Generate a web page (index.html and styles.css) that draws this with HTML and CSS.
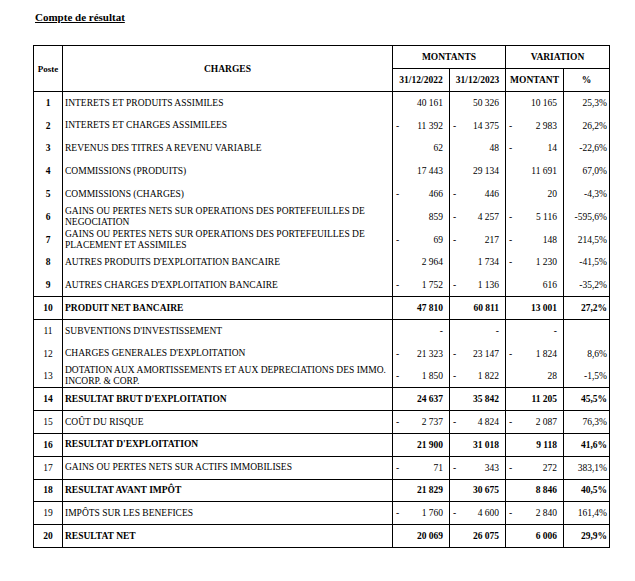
FILE: index.html
```html
<!DOCTYPE html>
<html lang="fr">
<head>
    <meta charset="UTF-8">
    <meta name="viewport" content="width=device-width, initial-scale=1.0">
    <title>Compte de résultat</title>
    <link rel="stylesheet" href="styles.css">
</head>
<body>
    <div class="page">
        <h1 class="page-title">Compte de résultat</h1>
        <table class="result-table">
            <colgroup>
                <col class="col-poste">
                <col class="col-label">
                <col class="col-amount">
                <col class="col-amount2">
                <col class="col-var">
                <col class="col-pct">
            </colgroup>
            <thead>
                <tr>
                    <th rowspan="2" class="th-poste">Poste</th>
                    <th rowspan="2">CHARGES</th>
                    <th colspan="2">MONTANTS</th>
                    <th colspan="2">VARIATION</th>
                </tr>
                <tr>
                    <th>31/12/2022</th>
                    <th>31/12/2023</th>
                    <th>MONTANT</th>
                    <th>%</th>
                </tr>
            </thead>
            <tbody>
                <tr>
                    <td class="poste strong">1</td>
                    <td class="label">INTERETS ET PRODUITS ASSIMILES</td>
                    <td class="num">40 161</td>
                    <td class="num">50 326</td>
                    <td class="num">10 165</td>
                    <td class="pct">25,3%</td>
                </tr>
                <tr>
                    <td class="poste strong">2</td>
                    <td class="label">INTERETS ET CHARGES ASSIMILEES</td>
                    <td class="num"><span class="minus">-</span>11 392</td>
                    <td class="num"><span class="minus">-</span>14 375</td>
                    <td class="num"><span class="minus">-</span>2 983</td>
                    <td class="pct">26,2%</td>
                </tr>
                <tr>
                    <td class="poste strong">3</td>
                    <td class="label">REVENUS DES TITRES A REVENU VARIABLE</td>
                    <td class="num">62</td>
                    <td class="num">48</td>
                    <td class="num"><span class="minus">-</span>14</td>
                    <td class="pct">-22,6%</td>
                </tr>
                <tr>
                    <td class="poste strong">4</td>
                    <td class="label">COMMISSIONS (PRODUITS)</td>
                    <td class="num">17 443</td>
                    <td class="num">29 134</td>
                    <td class="num">11 691</td>
                    <td class="pct">67,0%</td>
                </tr>
                <tr>
                    <td class="poste strong">5</td>
                    <td class="label">COMMISSIONS (CHARGES)</td>
                    <td class="num"><span class="minus">-</span>466</td>
                    <td class="num"><span class="minus">-</span>446</td>
                    <td class="num">20</td>
                    <td class="pct">-4,3%</td>
                </tr>
                <tr>
                    <td class="poste strong">6</td>
                    <td class="label">GAINS OU PERTES NETS SUR OPERATIONS DES PORTEFEUILLES DE<br>NEGOCIATION</td>
                    <td class="num">859</td>
                    <td class="num"><span class="minus">-</span>4 257</td>
                    <td class="num"><span class="minus">-</span>5 116</td>
                    <td class="pct">-595,6%</td>
                </tr>
                <tr>
                    <td class="poste strong">7</td>
                    <td class="label">GAINS OU PERTES NETS SUR OPERATIONS DES PORTEFEUILLES DE<br>PLACEMENT ET ASSIMILES</td>
                    <td class="num"><span class="minus">-</span>69</td>
                    <td class="num"><span class="minus">-</span>217</td>
                    <td class="num"><span class="minus">-</span>148</td>
                    <td class="pct">214,5%</td>
                </tr>
                <tr>
                    <td class="poste strong">8</td>
                    <td class="label">AUTRES PRODUITS D'EXPLOITATION BANCAIRE</td>
                    <td class="num">2 964</td>
                    <td class="num">1 734</td>
                    <td class="num"><span class="minus">-</span>1 230</td>
                    <td class="pct">-41,5%</td>
                </tr>
                <tr class="sep">
                    <td class="poste strong">9</td>
                    <td class="label">AUTRES CHARGES D'EXPLOITATION BANCAIRE</td>
                    <td class="num"><span class="minus">-</span>1 752</td>
                    <td class="num"><span class="minus">-</span>1 136</td>
                    <td class="num">616</td>
                    <td class="pct">-35,2%</td>
                </tr>
                <tr class="sep total">
                    <td class="poste">10</td>
                    <td class="label">PRODUIT NET BANCAIRE</td>
                    <td class="num">47 810</td>
                    <td class="num">60 811</td>
                    <td class="num">13 001</td>
                    <td class="pct">27,2%</td>
                </tr>
                <tr>
                    <td class="poste">11</td>
                    <td class="label">SUBVENTIONS D'INVESTISSEMENT</td>
                    <td class="num">-</td>
                    <td class="num">-</td>
                    <td class="num">-</td>
                    <td class="pct"></td>
                </tr>
                <tr>
                    <td class="poste">12</td>
                    <td class="label">CHARGES GENERALES D'EXPLOITATION</td>
                    <td class="num"><span class="minus">-</span>21 323</td>
                    <td class="num"><span class="minus">-</span>23 147</td>
                    <td class="num"><span class="minus">-</span>1 824</td>
                    <td class="pct">8,6%</td>
                </tr>
                <tr class="sep">
                    <td class="poste">13</td>
                    <td class="label">DOTATION AUX AMORTISSEMENTS ET AUX DEPRECIATIONS DES IMMO.<br>INCORP. &amp; CORP.</td>
                    <td class="num"><span class="minus">-</span>1 850</td>
                    <td class="num"><span class="minus">-</span>1 822</td>
                    <td class="num">28</td>
                    <td class="pct">-1,5%</td>
                </tr>
                <tr class="sep total">
                    <td class="poste">14</td>
                    <td class="label">RESULTAT BRUT D'EXPLOITATION</td>
                    <td class="num">24 637</td>
                    <td class="num">35 842</td>
                    <td class="num">11 205</td>
                    <td class="pct">45,5%</td>
                </tr>
                <tr class="sep">
                    <td class="poste">15</td>
                    <td class="label">COÛT DU RISQUE</td>
                    <td class="num"><span class="minus">-</span>2 737</td>
                    <td class="num"><span class="minus">-</span>4 824</td>
                    <td class="num"><span class="minus">-</span>2 087</td>
                    <td class="pct">76,3%</td>
                </tr>
                <tr class="sep total">
                    <td class="poste">16</td>
                    <td class="label">RESULTAT D'EXPLOITATION</td>
                    <td class="num">21 900</td>
                    <td class="num">31 018</td>
                    <td class="num">9 118</td>
                    <td class="pct">41,6%</td>
                </tr>
                <tr class="sep">
                    <td class="poste">17</td>
                    <td class="label">GAINS OU PERTES NETS SUR ACTIFS IMMOBILISES</td>
                    <td class="num"><span class="minus">-</span>71</td>
                    <td class="num"><span class="minus">-</span>343</td>
                    <td class="num"><span class="minus">-</span>272</td>
                    <td class="pct">383,1%</td>
                </tr>
                <tr class="sep total">
                    <td class="poste">18</td>
                    <td class="label">RESULTAT AVANT IMPÔT</td>
                    <td class="num">21 829</td>
                    <td class="num">30 675</td>
                    <td class="num">8 846</td>
                    <td class="pct">40,5%</td>
                </tr>
                <tr class="sep">
                    <td class="poste">19</td>
                    <td class="label">IMPÔTS SUR LES BENEFICES</td>
                    <td class="num"><span class="minus">-</span>1 760</td>
                    <td class="num"><span class="minus">-</span>4 600</td>
                    <td class="num"><span class="minus">-</span>2 840</td>
                    <td class="pct">161,4%</td>
                </tr>
                <tr class="sep total">
                    <td class="poste">20</td>
                    <td class="label">RESULTAT NET</td>
                    <td class="num">20 069</td>
                    <td class="num">26 075</td>
                    <td class="num">6 006</td>
                    <td class="pct">29,9%</td>
                </tr>
            </tbody>
        </table>
    </div>
</body>
</html>
```

FILE: styles.css
```css
body {
    margin: 0;
    padding: 0;
    background: #fff;
    color: #000;
    font-family: "Liberation Serif", "Times New Roman", serif;
}
.page {
    padding: 10px 0 0 33px;
}
.page-title {
    margin: 0 0 0 2px;
    font-size: 11px;
    line-height: 14px;
    font-weight: bold;
    text-decoration: underline;
}
.result-table {
    margin-top: 21px;
    border-collapse: collapse;
    table-layout: fixed;
    width: 576px;
    font-size: 9.5px;
}
.col-poste {
    width: 29px;
}
.col-label {
    width: 330px;
}
.col-amount {
    width: 57px;
}
.col-amount2 {
    width: 56px;
}
.col-var {
    width: 58px;
}
.col-pct {
    width: 46px;
}
.result-table th,
.result-table td {
    border-left: 1px solid #000;
    border-right: 1px solid #000;
    padding: 0;
    vertical-align: middle;
    white-space: nowrap;
}
.result-table th {
    border-top: 1px solid #000;
    border-bottom: 1px solid #000;
    height: 22px;
    font-weight: bold;
    text-align: center;
}
.th-poste {
    font-size: 9px;
}
.result-table tbody tr {
    height: 22.8px;
}
.result-table tr.sep td {
    border-bottom: 1px solid #000;
}
.poste {
    text-align: center;
}
.strong {
    font-weight: bold;
}
.label {
    padding-left: 2px !important;
    line-height: 11px;
    text-align: left;
}
.num {
    text-align: right;
    padding-right: 6px !important;
    padding-left: 3px !important;
}
.minus {
    float: left;
}
.pct {
    text-align: right;
    padding-right: 2px !important;
}
.total td {
    font-weight: bold;
}
```
